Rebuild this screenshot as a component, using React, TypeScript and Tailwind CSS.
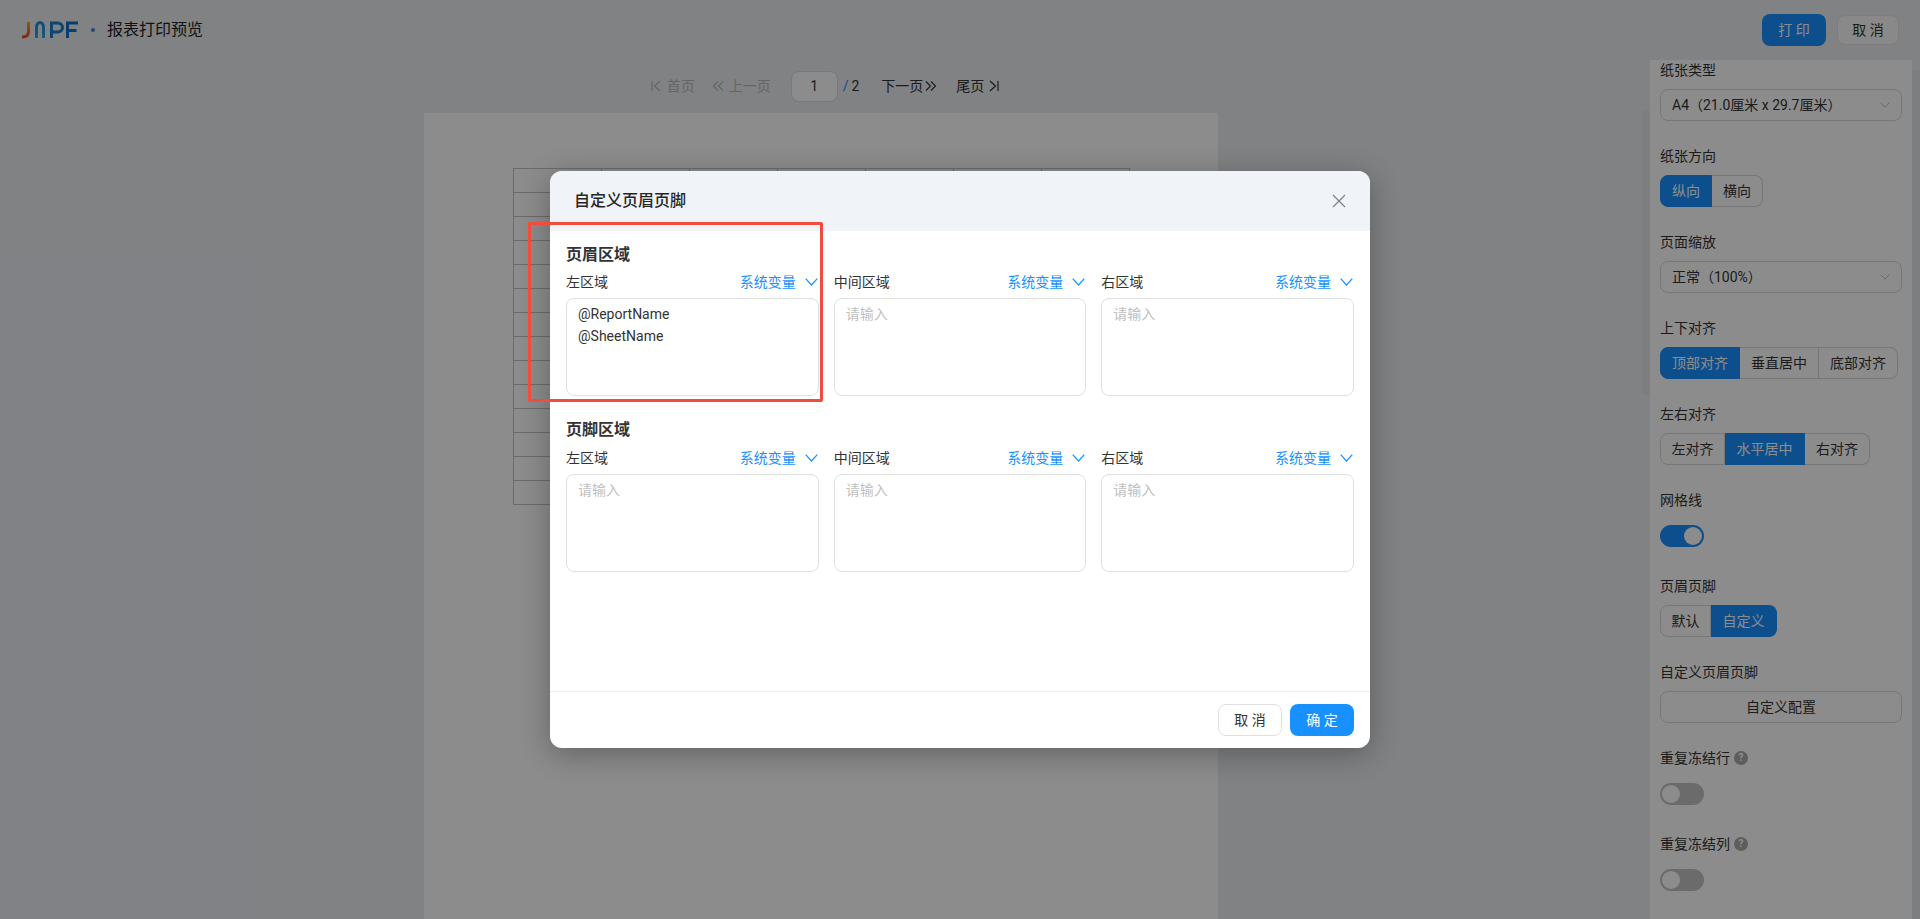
const Logo = () => (
  <svg width="58" height="18" viewBox="0 0 58 18" fill="none" strokeWidth="3">
    <defs>
      <linearGradient id="j" x1="0" y1="0" x2="0" y2="1">
        <stop offset="0" stopColor="#f5a81c" />
        <stop offset="1" stopColor="#e8501a" />
      </linearGradient>
      <linearGradient id="n" x1="0" y1="0" x2="0" y2="1">
        <stop offset="0" stopColor="#1a8fd8" />
        <stop offset="1" stopColor="#28a8e0" />
      </linearGradient>
    </defs>
    <path d="M7.5 1V10.5C7.5 14.5 5 16 1 16" stroke="url(#j)" />
    <path d="M15.5 17V6.5C15.5 3 17.5 1.5 19 1.5C20.5 1.5 22.5 3 22.5 6.5V17" stroke="url(#n)" />
    <path d="M30.5 17V2H36.5C39.5 2 41.5 4 41.5 6.5C41.5 9 39.5 11 36.5 11H30.5" stroke="#1a7fd0" />
    <path d="M46.5 17V2H57M46.5 9.5H55.5" stroke="#0f6fd0" />
  </svg>
);

// pager icons, thin like the ones in the screenshot
const FirstIcon = () => (
  <svg width="10" height="12" viewBox="0 0 10 12" fill="none" stroke="currentColor" strokeWidth="1.2">
    <path d="M1 1V11M9 1L3.5 6L9 11" />
  </svg>
);
const LastIcon = () => (
  <svg width="10" height="12" viewBox="0 0 10 12" fill="none" stroke="currentColor" strokeWidth="1.2">
    <path d="M9 1V11M1 1L6.5 6L1 11" />
  </svg>
);
const PrevIcon = () => (
  <svg width="12" height="12" viewBox="0 0 12 12" fill="none" stroke="currentColor" strokeWidth="1.2">
    <path d="M6 1.5L1.5 6L6 10.5M11 1.5L6.5 6L11 10.5" />
  </svg>
);
const NextIcon = () => (
  <svg width="12" height="12" viewBox="0 0 12 12" fill="none" stroke="currentColor" strokeWidth="1.2">
    <path d="M1 1.5L5.5 6L1 10.5M6 1.5L10.5 6L6 10.5" />
  </svg>
);

const Chevron = ({ className }: { className: string }) => (
  <svg viewBox="0 0 13 8" fill="none" stroke="currentColor" strokeWidth="1.2" className={className}>
    <path d="M0.7 0.7L6.5 7L12.3 0.7" />
  </svg>
);

const Label = ({ text, help }: { text: string; help?: boolean }) => (
  <div className="h-[22px] mb-2 flex items-center gap-1 text-sm text-[#333]">
    {text}
    {help && (
      <span className="w-[14px] h-[14px] rounded-full bg-[#aaa] text-white text-[10px] font-bold flex items-center justify-center">?</span>
    )}
  </div>
);

const SelectBox = ({ text }: { text: string }) => (
  <div className="h-8 mb-6 pl-[11px] pr-[11px] border border-[#d9d9d9] rounded-lg flex items-center justify-between text-sm text-[#333]">
    <span>{text}</span>
    <Chevron className="w-[10px] h-[6px] text-[#bbb]" />
  </div>
);

const Group = ({ items, active, widths }: { items: string[]; active: number; widths: string[] }) => (
  <div className="flex mb-6 h-8 w-fit text-sm text-[#333]">
    {items.map((item, i) => (
      <div
        key={item}
        className={`${widths[i]} flex items-center justify-center border-y ${i === 0 ? "border-l rounded-l-lg" : ""} ${i === items.length - 1 ? "border-r rounded-r-lg" : "border-r"} ${
          i === active ? "bg-[#1890ff] border-[#1890ff] text-white" : "border-[#d9d9d9]"
        }`}
      >
        {item}
      </div>
    ))}
  </div>
);

const Switch = ({ on }: { on?: boolean }) => (
  <div className="h-8 mb-6 pt-[6px]">
    <div className={`w-11 h-[22px] rounded-full p-0.5 flex ${on ? "bg-[#1890ff] justify-end" : "bg-[#c4c4c4] justify-start"}`}>
      <div className="w-[18px] h-[18px] rounded-full bg-white" />
    </div>
  </div>
);

const AreaCol = ({ title, value }: { title: string; value?: string }) => (
  <div className="min-w-0">
    <div className="h-[22px] mb-[5px] flex items-center justify-between text-sm text-[#333]">
      <span>{title}</span>
      <span className="flex items-center gap-[9px] text-[#1890ff] pr-px">
        {"系统变量"}
        <Chevron className="w-[13px] h-2" />
      </span>
    </div>
    <textarea
      readOnly
      defaultValue={value}
      placeholder="请输入"
      className="block w-full h-[98px] resize-none border border-[#e0e0e0] rounded-lg pl-[11px] pr-3 py-1 text-sm leading-[22px] text-[#333] placeholder:text-[#bfbfbf] outline-none"
    />
  </div>
);

const Section = ({ title, value, titleGap }: { title: string; value?: string; titleGap: string }) => (
  <div className="mb-[22px]">
    <div className={`h-[22px] pt-[2px] ${titleGap} flex items-center text-base font-semibold text-[#333]`}>{title}</div>
    <div className="grid grid-cols-3 gap-[15px]">
      <AreaCol title="左区域" value={value} />
      <AreaCol title="中间区域" />
      <AreaCol title="右区域" />
    </div>
  </div>
);

export default function App() {
  const rows = Array.from({ length: 14 });
  const cols = Array.from({ length: 7 });
  return (
    <div className="h-screen overflow-hidden relative flex flex-col bg-[#ebedf1] font-['Roboto','Noto_Sans_CJK_SC',sans-serif]">
      <header className="h-[60px] shrink-0 flex items-center justify-between pl-[21px] pr-[21px]">
        <div className="flex items-center">
          <Logo />
          <span className="w-1 h-1 rounded-full bg-[#4a80d8] ml-[12px] mr-[12px]" />
          <span className="text-base text-[#1f1f1f]">报表打印预览</span>
        </div>
        <div className="flex items-center gap-[11px]">
          <button className="w-16 h-8 rounded-lg bg-[#1890ff] text-white text-sm">打 印</button>
          <button className="w-[62px] h-[30px] rounded-lg bg-white/70 border border-[#e3e3e3] text-[#333] text-sm">取 消</button>
        </div>
      </header>

      <div className="flex-1 flex min-h-0">
        <main className="flex-1 min-w-0 flex">
          <div className="flex-1 min-w-0 flex flex-col items-center">
            <div className="h-[53px] shrink-0 pb-px flex items-center text-sm text-[#333] pl-[8px]">
              <span className="flex items-center gap-[6px] text-[#b8b8b8]"><FirstIcon />首页</span>
              <span className="flex items-center gap-[5px] text-[#b8b8b8] ml-[17px]"><PrevIcon />上一页</span>
              <input readOnly value="1" className="w-[47px] h-[31px] ml-[20px] rounded-lg border border-[#dcdcdc] bg-white text-center text-sm text-[#333] outline-none" />
              <span className="text-[#1890ff] ml-[5px]">/</span>
              <span className="ml-[3px]">2</span>
              <span className="flex items-center gap-0.5 ml-[22px]">下一页<NextIcon /></span>
              <span className="flex items-center gap-[5px] ml-[19px]">尾页<LastIcon /></span>
            </div>
            <div className="w-[794px] flex-1 bg-white pl-[89px] pt-[55px]">
              <table className="border-collapse">
                <tbody>
                  {rows.map((_, r) => (
                    <tr key={r}>
                      {cols.map((_, c) => (
                        <td key={c} className="w-[88px] h-6 border border-[#c4c4c4] p-0" />
                      ))}
                    </tr>
                  ))}
                </tbody>
              </table>
            </div>
          </div>
          <div className="w-2 shrink-0">
            <div className="mt-[50px] h-[285px] bg-[#e4e5e8] rounded" />
          </div>
        </main>

        <aside className="w-[270px] shrink-0 flex">
          <div className="flex-1 min-w-0 bg-white pl-[10px] pr-[10px] overflow-hidden">
            <div className="-mt-px">
              <Label text="纸张类型" />
              <SelectBox text="A4（21.0厘米 x 29.7厘米）" />
              <Label text="纸张方向" />
              <Group items={["纵向", "横向"]} active={0} widths={["w-[52px]", "w-[51px]"]} />
              <Label text="页面缩放" />
              <SelectBox text="正常（100%）" />
              <Label text="上下对齐" />
              <Group items={["顶部对齐", "垂直居中", "底部对齐"]} active={0} widths={["w-20", "w-[79px]", "w-[79px]"]} />
              <Label text="左右对齐" />
              <Group items={["左对齐", "水平居中", "右对齐"]} active={1} widths={["w-[65px]", "w-20", "w-[65px]"]} />
              <Label text="网格线" />
              <Switch on />
              <Label text="页眉页脚" />
              <Group items={["默认", "自定义"]} active={1} widths={["w-[51px]", "w-[66px]"]} />
              <Label text="自定义页眉页脚" />
              <div className="h-8 mb-6 border border-[#d9d9d9] rounded-lg flex items-center justify-center text-sm text-[#333]">自定义配置</div>
              <Label text="重复冻结行" help />
              <Switch />
              <Label text="重复冻结列" help />
              <Switch />
            </div>
          </div>
          <div className="w-2 shrink-0">
            <div className="mt-[10px] h-full bg-[#e4e5e8]" />
          </div>
        </aside>
      </div>

      {/* mask and dialog */}
      <div className="absolute inset-0 bg-black/45 flex justify-center pt-[171px]">
        <div className="relative w-[820px] h-[577px] bg-white rounded-xl overflow-hidden shadow-[0_6px_30px_rgba(0,0,0,0.3)] flex flex-col">
          <div className="h-[60px] shrink-0 bg-[#f0f3f8] pl-6 pr-6 flex items-center justify-between">
            <span className="text-base font-medium text-[#262626]">自定义页眉页脚</span>
            <svg width="14" height="14" viewBox="0 0 14 14" fill="none" stroke="#808080" strokeWidth="1.2">
              <path d="M1 1L13 13M13 1L1 13" />
            </svg>
          </div>
          <div className="flex-1 px-4 pt-3">
            <Section title="页眉区域" value={"@ReportName\n@SheetName"} titleGap="mb-[6px]" />
            <Section title="页脚区域" titleGap="mb-[7px]" />
          </div>
          <div className="h-[57px] shrink-0 border-t border-[#ececec] pr-4 flex items-center justify-end gap-2">
            <button className="w-16 h-8 rounded-lg border border-[#e0e0e0] bg-white text-sm text-[#333]">取 消</button>
            <button className="w-16 h-8 rounded-lg bg-[#1890ff] text-sm text-white">确 定</button>
          </div>
        </div>
        <div className="absolute left-[528px] top-[222px] w-[295px] h-[180px] border-[3px] border-[#f44b3f] rounded-[2px]" />
      </div>
    </div>
  );
}
